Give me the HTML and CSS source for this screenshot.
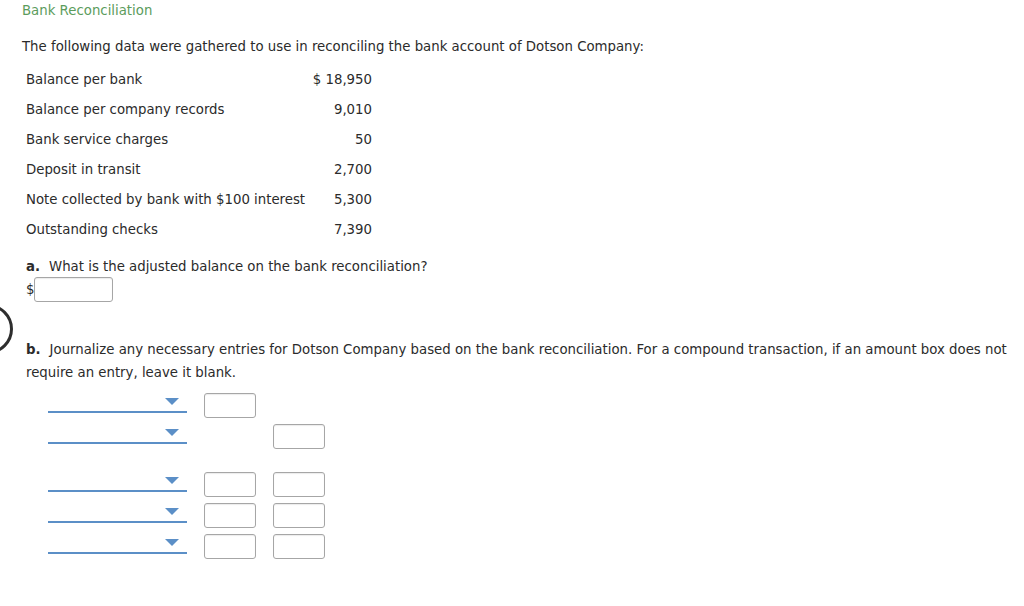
FILE: index.html
```html
<!DOCTYPE html>
<html>
<head>
<meta charset="utf-8">
<link rel="stylesheet" href="styles.css">
</head>
<body>
<div class="page">
  <div class="title">Bank Reconciliation</div>
  <p class="intro">The following data were gathered to use in reconciling the bank account of Dotson Company:</p>
  <table class="data">
    <tr><td class="lbl">Balance per bank</td><td class="num">$ 18,950</td></tr>
    <tr><td class="lbl">Balance per company records</td><td class="num">9,010</td></tr>
    <tr><td class="lbl">Bank service charges</td><td class="num">50</td></tr>
    <tr><td class="lbl">Deposit in transit</td><td class="num">2,700</td></tr>
    <tr><td class="lbl">Note collected by bank with $100 interest</td><td class="num">5,300</td></tr>
    <tr><td class="lbl">Outstanding checks</td><td class="num">7,390</td></tr>
  </table>
  <div class="q"><b class="mark">a.</b>What is the adjusted balance on the bank reconciliation?</div>
  <div class="answer"><span class="dollar">$</span><span class="box wide"></span></div>
  <div class="q qb"><b class="mark">b.</b>Journalize any necessary entries for Dotson Company based on the bank reconciliation. For a compound transaction, if an amount box does not require an entry, leave it blank.</div>
  <div class="journal">
    <div class="entry">
      <div class="jrow"><span class="sel"></span><span class="box"></span><span class="slot"></span></div>
      <div class="jrow"><span class="sel"></span><span class="slot"></span><span class="box"></span></div>
    </div>
    <div class="entry">
      <div class="jrow"><span class="sel"></span><span class="box"></span><span class="box"></span></div>
      <div class="jrow"><span class="sel"></span><span class="box"></span><span class="box"></span></div>
      <div class="jrow"><span class="sel"></span><span class="box"></span><span class="box"></span></div>
    </div>
  </div>
</div>
<div class="ring"></div>
</body>
</html>
```

FILE: styles.css
```css
html, body {
  margin: 0;
  padding: 0;
  background: #fff;
}
body {
  font-family: "DejaVu Sans", Verdana, sans-serif;
  font-size: 13.3px;
  color: #2b2b2b;
  width: 1024px;
  height: 606px;
  overflow: hidden;
  position: relative;
}
.page {
  padding-left: 22px;
  padding-top: 1px;
}
.title {
  color: #5c9c5c;
  line-height: 20px;
  height: 20px;
}
.intro {
  margin: 16px 0 8px 0;
  line-height: 20px;
}
.data {
  border-collapse: collapse;
  margin-left: 4px;
  table-layout: fixed;
  width: 346px;
}
.data td {
  height: 30px;
  padding: 0;
  line-height: 20px;
  white-space: nowrap;
}
.data td.lbl {
  width: 286px;
}
.data td.num {
  text-align: right;
  width: 60px;
}
.q {
  margin-left: 4px;
  margin-top: 12px;
  line-height: 20px;
}
.mark {
  display: inline-block;
  margin-right: 9px;
}
.answer {
  margin-left: 4px;
  margin-top: 0;
  display: flex;
  align-items: center;
  height: 25px;
}
.dollar {
  width: 8px;
}
.box {
  display: block;
  width: 50px;
  height: 23px;
  border: 1px solid #a6a6a6;
  border-radius: 3px;
  box-shadow: inset 0 1px 1px rgba(0,0,0,0.08);
  background: #fff;
  flex: none;
}
.box.wide {
  width: 77px;
}
.qb {
  margin-top: 36px;
  line-height: 23px;
  padding-right: 8px;
}
.journal {
  margin-top: 9px;
  margin-left: 26px;
  display: flex;
  flex-direction: column;
  gap: 23px;
}
.entry {
  display: flex;
  flex-direction: column;
  gap: 6px;
}
.jrow {
  display: flex;
  gap: 17px;
  height: 25px;
}
.sel {
  display: block;
  width: 139px;
  height: 18px;
  border-bottom: 2px solid #5b8fc7;
  position: relative;
  flex: none;
}
.sel::after {
  content: "";
  position: absolute;
  right: 8px;
  top: 5px;
  width: 0;
  height: 0;
  border-left: 7px solid transparent;
  border-right: 7px solid transparent;
  border-top: 7px solid #5b8fc7;
}
.slot {
  display: block;
  width: 52px;
  flex: none;
}
.ring {
  position: absolute;
  left: -37px;
  top: 304px;
  width: 44px;
  height: 44px;
  border: 3px solid #2e2e2e;
  border-radius: 50%;
}
```
